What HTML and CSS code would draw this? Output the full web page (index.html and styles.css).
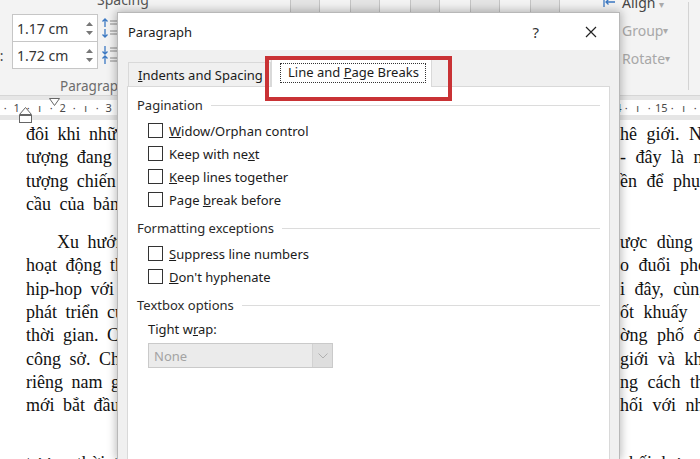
FILE: index.html
```html
<!DOCTYPE html>
<html>
<head>
  <meta charset="UTF-8">
  <title>Paragraph - Line and Page Breaks</title>
  <link rel="stylesheet" href="styles.css">
</head>
<body>
  <!-- word ribbon (only the edges show around the dialog) -->
  <div class="ribbon">
    <div class="grp-para">
      <div class="grp-title">Spacing</div>
      <div class="spin-row">
        <span class="lbl"></span>
        <div class="spin">
          <span class="val">1.17 cm</span>
          <span class="arr">
            <svg width="7" height="4" viewBox="0 0 7 4"><path d="M0 4 L3.5 0 L7 4Z" fill="#777"/></svg>
            <svg width="7" height="4" viewBox="0 0 7 4"><path d="M0 0 L3.5 4 L7 0Z" fill="#777"/></svg>
          </span>
        </div>
        <svg class="sp-ico" width="17" height="22" viewBox="0 0 17 22">
          <path d="M4 2 L4 10 M1.5 4.5 L4 2 L6.5 4.5" stroke="#3b78c2" stroke-width="1.3" fill="none"/>
          <path d="M4 12 L4 20 M1.5 17.5 L4 20 L6.5 17.5" stroke="#3b78c2" stroke-width="1.3" fill="none"/>
          <path d="M9 4h7M9 7h7M9 14h7M9 17h7" stroke="#8a8a8a" stroke-width="1"/>
        </svg>
      </div>
      <div class="spin-row">
        <span class="lbl">r:</span>
        <div class="spin">
          <span class="val">1.72 cm</span>
          <span class="arr">
            <svg width="7" height="4" viewBox="0 0 7 4"><path d="M0 4 L3.5 0 L7 4Z" fill="#777"/></svg>
            <svg width="7" height="4" viewBox="0 0 7 4"><path d="M0 0 L3.5 4 L7 0Z" fill="#777"/></svg>
          </span>
        </div>
        <svg class="sp-ico" width="17" height="22" viewBox="0 0 17 22">
          <path d="M4 2 L4 10 M1.5 7.5 L4 10 L6.5 7.5" stroke="#3b78c2" stroke-width="1.3" fill="none"/>
          <path d="M4 12 L4 20 M1.5 14.5 L4 12 L6.5 14.5" stroke="#3b78c2" stroke-width="1.3" fill="none"/>
          <path d="M9 4h7M9 7h7M9 14h7M9 17h7" stroke="#8a8a8a" stroke-width="1"/>
        </svg>
      </div>
      <div class="grp-name">Paragraph</div>
    </div>

    <div class="ribbon-icons">
      <span class="r-ico"></span>
      <span class="r-ico"></span>
      <span class="r-ico"></span>
      <span class="r-ico"></span>
      <span class="r-ico"></span>
    </div>

    <div class="grp-arr">
      <div class="arr-col">
        <div class="arr-row">
          <svg class="al-ico" width="13" height="12" viewBox="0 0 13 12">
            <path d="M1 1v10" stroke="#3b78c2" stroke-width="1.3"/>
            <path d="M12 6H3 M5.5 3.5 L3 6 L5.5 8.5" stroke="#3b78c2" stroke-width="1.3" fill="none"/>
          </svg>
          <span class="al-txt">Align <i class="dd">▾</i></span>
        </div>
        <div class="arr-row off"><span class="al-gap"></span>Group <i class="dd">▾</i></div>
        <div class="arr-row off"><span class="al-gap"></span>Rotate <i class="dd">▾</i></div>
      </div>
      <div class="sep"></div>
    </div>
  </div>

  <!-- ruler -->
  <div class="ruler">
    <div class="scale">
      <span class="cm"><i></i><i>·</i><i>ı</i><i>·</i></span>
      <span class="cm"><i>1</i><i>·</i><i>ı</i><i>·</i></span>
      <span class="cm"><i>2</i><i>·</i><i>ı</i><i>·</i></span>
      <span class="cm"><i>3</i><i>·</i><i>ı</i><i>·</i></span>
      <span class="cm"><i>4</i><i>·</i><i>ı</i><i>·</i></span>
      <span class="cm"><i>5</i><i>·</i><i>ı</i><i>·</i></span>
      <span class="cm"><i>6</i><i>·</i><i>ı</i><i>·</i></span>
      <span class="cm"><i>7</i><i>·</i><i>ı</i><i>·</i></span>
      <span class="cm"><i>8</i><i>·</i><i>ı</i><i>·</i></span>
      <span class="cm"><i>9</i><i>·</i><i>ı</i><i>·</i></span>
      <span class="cm"><i>10</i><i>·</i><i>ı</i><i>·</i></span>
      <span class="cm"><i>11</i><i>·</i><i>ı</i><i>·</i></span>
      <span class="cm"><i>12</i><i>·</i><i>ı</i><i>·</i></span>
      <span class="cm"><i>13</i><i>·</i><i>ı</i><i>·</i></span>
      <span class="cm"><i>14</i><i>·</i><i>ı</i><i>·</i></span>
      <span class="cm"><i>15</i><i>·</i><i>ı</i><i>·</i></span>
    </div>
    <!-- indent markers sit on top of the scale -->
    <svg class="mk-first" width="11" height="9" viewBox="0 0 11 9">
      <path d="M0.5 0.5 H10.5 L5.5 7.5Z" fill="#fff" stroke="#666"/>
    </svg>
    <svg class="mk-left" width="13" height="16" viewBox="0 0 13 16">
      <path d="M0.5 7.5 L6.5 0.5 L12.5 7.5Z" fill="#fff" stroke="#666"/>
      <rect x="0.5" y="8.5" width="12" height="7" fill="#fff" stroke="#666"/>
    </svg>
  </div>

  <!-- document text -->
  <div class="doc">
    <div class="para">
      <div class="ln"><span class="l">đôi khi những</span><span class="r">hê giới. Nă</span></div>
      <div class="ln"><span class="l">tượng đang được</span><span class="r">- đây là nh</span></div>
      <div class="ln"><span class="l">tượng chiến lược</span><span class="r">ền để phục</span></div>
      <div class="ln"><span class="l">cầu của bản thân</span><span class="r"></span></div>
    </div>
    <div class="para">
      <div class="ln first"><span class="l">Xu hướng</span><span class="r">ược dùng</span></div>
      <div class="ln"><span class="l">hoạt động thể</span><span class="r">o đuổi pho</span></div>
      <div class="ln"><span class="l">hip-hop với</span><span class="r">i đây, cùng</span></div>
      <div class="ln"><span class="l">phát triển của</span><span class="r">ốt khuấy</span></div>
      <div class="ln"><span class="l">thời gian. Cũng</span><span class="r">ờng phố đ</span></div>
      <div class="ln"><span class="l">công sở. Cho</span><span class="r">giới và kh</span></div>
      <div class="ln"><span class="l">riêng nam giới</span><span class="r">ng cách th</span></div>
      <div class="ln"><span class="l">mới bắt đầu</span><span class="r">hối với nh</span></div>
    </div>
    <div class="para tail">
      <div class="ln"><span class="l">tượng thời trang</span><span class="r">phối hợp</span></div>
    </div>
  </div>

  <!-- paragraph dialog -->
  <div class="dialog">
    <div class="dlg-title">
      <span class="dlg-name">Paragraph</span>
      <span class="help">?</span>
      <svg class="close" width="12" height="12" viewBox="0 0 12 12">
        <path d="M1 1 L11 11 M11 1 L1 11" stroke="#222" stroke-width="1.2"/>
      </svg>
    </div>
    <div class="dlg-body">
      <div class="tabs">
        <div class="tab"><u>I</u>ndents and Spacing</div>
        <div class="tab active"><span class="focus">Line and <u>P</u>age Breaks</span></div>
      </div>
      <div class="panel">
        <div class="section">
          <div class="sec-head"><span>Pagination</span></div>
          <div class="cb-row"><span class="cb"></span><span><u>W</u>idow/Orphan control</span></div>
          <div class="cb-row"><span class="cb"></span><span>Keep with ne<u>x</u>t</span></div>
          <div class="cb-row"><span class="cb"></span><span><u>K</u>eep lines together</span></div>
          <div class="cb-row"><span class="cb"></span><span>Page <u>b</u>reak before</span></div>
        </div>
        <div class="section">
          <div class="sec-head"><span>Formatting exceptions</span></div>
          <div class="cb-row"><span class="cb"></span><span><u>S</u>uppress line numbers</span></div>
          <div class="cb-row"><span class="cb"></span><span><u>D</u>on't hyphenate</span></div>
        </div>
        <div class="section">
          <div class="sec-head"><span>Textbox options</span></div>
          <div class="field-lbl">Tight w<u>r</u>ap:</div>
          <div class="select">
            <span class="sel-val">None</span>
            <span class="sel-btn">
              <svg width="10" height="6" viewBox="0 0 10 6"><path d="M0.5 0.5 L5 5 L9.5 0.5" stroke="#b0b0b0" fill="none"/></svg>
            </span>
          </div>
        </div>
      </div>
    </div>
    <!-- red annotation box round the active tab -->
    <div class="mark"></div>
  </div>
</body>
</html>
```

FILE: styles.css
```css
* {
  box-sizing: border-box;
}

html,
body{
  margin: 0;
  height: 100%;
}

body{
  width: 700px;
  height: 459px;
  overflow: hidden;
  position: relative;
  background: #fff;
  font-family: "Noto Sans", "Open Sans", sans-serif;
}

i{
  font-style: normal;
}

/* ribbon */

.ribbon{
  height: 96px;
  background: #f3f3f3;
  border-bottom: 1px solid #d6d6d6;
  display: flex;
  overflow: hidden;
}

.grp-para{
  width: 118px;
  flex: none;
}

.grp-title{
  margin-top: -8px;
  height: 15px;
  line-height: 15px;
  padding-left: 97px;
  font-size: 14px;
  color: #555;
  white-space: nowrap;
}

.spin-row{
  display: flex;
  align-items: center;
  height: 28px;
}

.grp-title + .spin-row{
  margin-top: 7px;
}

.spin-row + .spin-row{
  margin-top: -1px;
}

.lbl{
  width: 12px;
  font-size: 14px;
  color: #444;
  text-indent: -6px;
  overflow: hidden;
}

.spin{
  width: 86px;
  height: 28px;
  border: 1px solid #c6c6c6;
  background: #fff;
  display: flex;
  align-items: center;
  padding-left: 4px;
  font-size: 14px;
  color: #333;
}

.spin .val{
  flex: 1;
}

.spin .arr{
  width: 16px;
  display: flex;
  flex-direction: column;
  align-items: center;
  gap: 5px;
}

.sp-ico{
  margin-left: 3px;
  flex: none;
}

.grp-name{
  margin-top: 9px;
  padding-left: 60px;
  font-size: 13.5px;
  line-height: 16px;
  color: #6d6d6d;
  white-space: nowrap;
}

.ribbon-icons{
  display: flex;
  gap: 30px;
  margin-left: 172px;
}

.r-ico{
  width: 30px;
  height: 22px;
  margin-top: -9px;
  border: 1px solid #c4c4c4;
  background: #e4e4e4;
}

.grp-arr{
  margin-left: auto;
  width: 97px;
  flex: none;
  display: flex;
}

.arr-col{
  width: 85px;
}

.arr-row{
  display: flex;
  align-items: center;
  height: 28px;
  font-size: 14px;
  color: #444;
  white-space: nowrap;
}

.arr-row:first-child{
  margin-top: -12px;
}

.arr-row.off{
  color: #a8a8a8;
}

.al-ico{
  margin-right: 6px;
}

.al-gap{
  width: 19px;
}

.dd{
  font-size: 10px;
  color: #aaa;
}

.sep{
  width: 1px;
  height: 88px;
  margin-top: 2px;
  background: #d3d3d3;
}

/* ruler */

.ruler{
  height: 24px;
  background: #e6e6e6;
  padding: 4px 0 5px;
  position: relative;
}

.scale{
  height: 15px;
  background: #fff;
  display: flex;
  margin-left: -35px;
  font-size: 11px;
  line-height: 15px;
  color: #4a4a4a;
  white-space: nowrap;
}

.cm{
  display: flex;
  flex: none;
}

.cm i{
  width: 11.5px;
  text-align: center;
  flex: none;
}

.mk-first{
  position: absolute;
  left: 49px;
  top: 2px;
}

.mk-left{
  position: absolute;
  left: 19px;
  top: 11px;
  z-index: 1;
}

/* document */

.doc{
  padding: 3px 0 0 26px;
  font-family: "Liberation Serif", "Times New Roman", serif;
  font-size: 18px;
  line-height: 23.3px;
  color: #111;
}

.para{
  margin-bottom: 15px;
}

/* margins collapse, so this alone sets the gap above the last line */
.para.tail{
  margin-top: 34px;
}

.ln{
  display: flex;
  white-space: nowrap;
}

.ln.first .l{
  padding-left: 31px;
}

.ln .l{
  flex: 1;
  overflow: hidden;
  word-spacing: 4px;
}

.ln .r{
  width: 80px;
  flex: none;
  overflow: hidden;
  word-spacing: 5px;
}

/* dialog */

.dialog{
  position: absolute;
  z-index: 5;
  left: 117px;
  top: 12px;
  width: 503px;
  height: 447px;
  overflow: hidden;
  background: #f0f0f0;
  border: 1px solid #b8b8b8;
  border-bottom: none;
  box-shadow: 0 0 9px 1px rgba(0, 0, 0, 0.28);
  font-size: 13px;
  color: #1b1b1b;
}

.dlg-title{
  height: 37px;
  background: #fff;
  display: flex;
  align-items: center;
  padding-left: 10px;
}

.dlg-name{
  flex: 1;
  font-size: 13px;
}

.help{
  font-size: 15px;
  color: #333;
  margin-right: 46px;
}

.close{
  margin-right: 22px;
}

.dlg-body{
  padding: 8px 9px 0;
}

.tabs{
  display: flex;
  align-items: flex-end;
  padding-left: 1px;
  height: 28px;
  position: relative;
  z-index: 1;
}

.tab{
  height: 24px;
  width: 143px;
  padding: 3px 0 0 9px;
  border: 1px solid #d9d9d9;
  border-bottom: none;
  background: #f0f0f0;
  white-space: nowrap;
  overflow: hidden;
}

.tab.active{
  width: 161px;
  height: 28px;
  padding: 3px 0 0 8px;
  margin-bottom: -1px;
  background: #fff;
}

.focus{
  display: inline-block;
  height: 20px;
  line-height: 17px;
  padding: 0 6px 0 7px;
  border: 1px dotted #333;
}

.panel{
  background: #fff;
  border: 1px solid #d9d9d9;
  border-bottom: none;
  height: 380px;
  padding: 8px 9px 0 9px;
}

.section{
  margin-bottom: 7px;
}

.sec-head{
  display: flex;
  align-items: center;
  gap: 8px;
  height: 20px;
  margin-bottom: 4px;
  color: #2a2a2a;
  white-space: nowrap;
}

.sec-head::after{
  content: "";
  flex: 1;
  height: 1px;
  background: #dcdcdc;
}

.cb-row{
  display: flex;
  align-items: center;
  gap: 6px;
  height: 23px;
  padding-left: 11px;
  white-space: nowrap;
}

.cb{
  width: 15px;
  height: 15px;
  border: 1px solid #333;
  background: #fff;
  flex: none;
}

.field-lbl{
  height: 20px;
  line-height: 20px;
  padding-left: 11px;
}

.select{
  margin: 4px 0 0 11px;
  width: 185px;
  height: 25px;
  border: 1px solid #cacaca;
  background: #ebebeb;
  display: flex;
  align-items: center;
}

.sel-val{
  flex: 1;
  padding-left: 5px;
  color: #a3a3a3;
}

.sel-btn{
  width: 20px;
  height: 23px;
  background: #dedede;
  border-left: 1px solid #d2d2d2;
  display: flex;
  align-items: center;
  justify-content: center;
}

.mark{
  position: absolute;
  left: 147px;
  top: 43px;
  width: 187px;
  height: 45px;
  border: 4px solid #c93235;
  z-index: 2;
}
```
